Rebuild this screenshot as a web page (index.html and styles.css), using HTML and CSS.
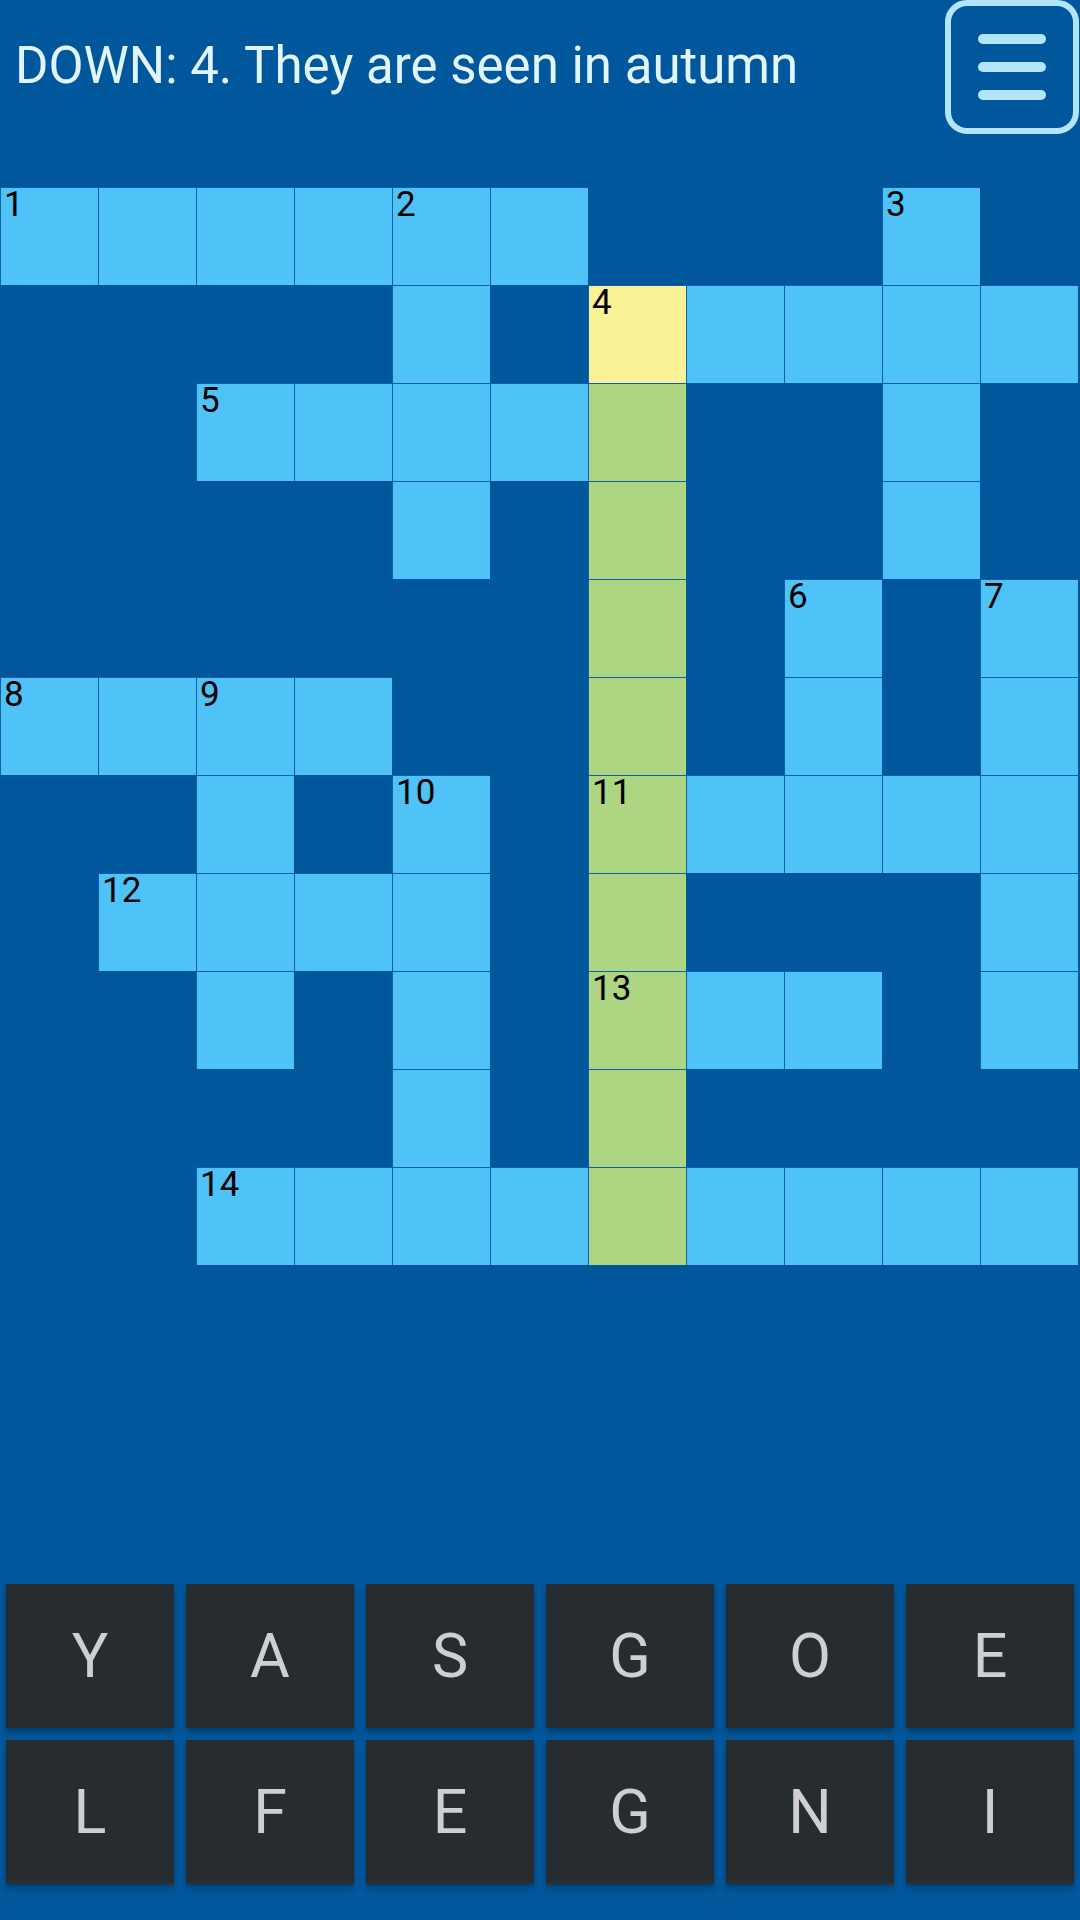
FILE: index.html
```html
<!DOCTYPE html>
<html>
<head>
<meta charset="utf-8">
<link rel="stylesheet" href="styles.css">
</head>
<body>
<div class="top">
  <div class="clue">DOWN: 4. They are seen in autumn</div>
  <div class="menu"><span class="bar"></span><span class="bar"></span><span class="bar"></span></div>
</div>
<div class="board">
  <div class="c"><span class="n">1</span></div><div class="c"></div><div class="c"></div><div class="c"></div><div class="c"><span class="n">2</span></div><div class="c"></div><div class="e"></div><div class="e"></div><div class="e"></div><div class="c"><span class="n">3</span></div><div class="e"></div>
  <div class="e"></div><div class="e"></div><div class="e"></div><div class="e"></div><div class="c"></div><div class="e"></div><div class="y"><span class="n">4</span></div><div class="c"></div><div class="c"></div><div class="c"></div><div class="c"></div>
  <div class="e"></div><div class="e"></div><div class="c"><span class="n">5</span></div><div class="c"></div><div class="c"></div><div class="c"></div><div class="g"></div><div class="e"></div><div class="e"></div><div class="c"></div><div class="e"></div>
  <div class="e"></div><div class="e"></div><div class="e"></div><div class="e"></div><div class="c"></div><div class="e"></div><div class="g"></div><div class="e"></div><div class="e"></div><div class="c"></div><div class="e"></div>
  <div class="e"></div><div class="e"></div><div class="e"></div><div class="e"></div><div class="e"></div><div class="e"></div><div class="g"></div><div class="e"></div><div class="c"><span class="n">6</span></div><div class="e"></div><div class="c"><span class="n">7</span></div>
  <div class="c"><span class="n">8</span></div><div class="c"></div><div class="c"><span class="n">9</span></div><div class="c"></div><div class="e"></div><div class="e"></div><div class="g"></div><div class="e"></div><div class="c"></div><div class="e"></div><div class="c"></div>
  <div class="e"></div><div class="e"></div><div class="c"></div><div class="e"></div><div class="c"><span class="n">10</span></div><div class="e"></div><div class="g"><span class="n">11</span></div><div class="c"></div><div class="c"></div><div class="c"></div><div class="c"></div>
  <div class="e"></div><div class="c"><span class="n">12</span></div><div class="c"></div><div class="c"></div><div class="c"></div><div class="e"></div><div class="g"></div><div class="e"></div><div class="e"></div><div class="e"></div><div class="c"></div>
  <div class="e"></div><div class="e"></div><div class="c"></div><div class="e"></div><div class="c"></div><div class="e"></div><div class="g"><span class="n">13</span></div><div class="c"></div><div class="c"></div><div class="e"></div><div class="c"></div>
  <div class="e"></div><div class="e"></div><div class="e"></div><div class="e"></div><div class="c"></div><div class="e"></div><div class="g"></div><div class="e"></div><div class="e"></div><div class="e"></div><div class="e"></div>
  <div class="e"></div><div class="e"></div><div class="c"><span class="n">14</span></div><div class="c"></div><div class="c"></div><div class="c"></div><div class="g"></div><div class="c"></div><div class="c"></div><div class="c"></div><div class="c"></div>
</div>
<div class="keys">
  <div class="key">Y</div><div class="key">A</div><div class="key">S</div><div class="key">G</div><div class="key">O</div><div class="key">E</div>
  <div class="key">L</div><div class="key">F</div><div class="key">E</div><div class="key">G</div><div class="key">N</div><div class="key">I</div>
</div>
</body>
</html>
```
FILE: styles.css
```css
html, body {
  margin: 0;
  padding: 0;
}
body {
  width: 1080px;
  height: 1920px;
  background: #01579b;
  font-family: Roboto, "Noto Sans", sans-serif;
  overflow: hidden;
}
.top {
  display: flex;
  justify-content: space-between;
  align-items: flex-start;
  height: 187px;
}
.clue {
  color: #e1f5fe;
  font-size: 51px;
  padding: 36px 0 0 15px;
  white-space: nowrap;
}
.menu {
  box-sizing: border-box;
  width: 134px;
  height: 134px;
  margin-right: 1px;
  border: 6px solid #b3e5fc;
  border-radius: 22px;
  display: flex;
  flex-direction: column;
  align-items: center;
  justify-content: center;
  gap: 18px;
}
.bar {
  display: block;
  width: 68px;
  height: 10px;
  border-radius: 5px;
  background: #b3e5fc;
}
.board {
  display: grid;
  grid-template-columns: repeat(11, 98px);
  grid-auto-rows: 98px;
}
.c, .y, .g {
  box-sizing: border-box;
  border-left: 1px solid #0f5fa8;
  border-top: 1px solid #0f5fa8;
  padding: 0 0 0 3px;
}
.c { background: #4fc3f7; }
.y { background: #fbf297; }
.g { background: #aed581; }
.n {
  display: block;
  font-size: 35px;
  line-height: 33px;
  color: #000;
}
.keys {
  display: grid;
  grid-template-columns: repeat(6, 168px);
  grid-auto-rows: 144px;
  gap: 12px;
  padding: 0 6px;
  margin-top: 319px;
}
.key {
  background: #272c30;
  color: #cfcfcf;
  font-size: 61px;
  display: flex;
  align-items: center;
  justify-content: center;
  box-shadow: 0 4px 6px rgba(0, 0, 0, 0.3);
}
```
